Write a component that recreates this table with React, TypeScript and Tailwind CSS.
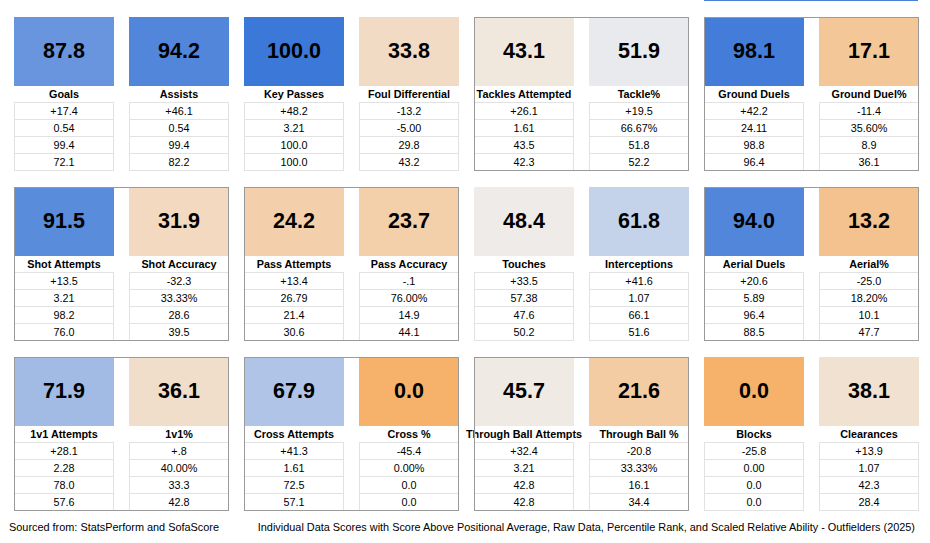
type Stat = {
  label: string;
  score: string;
  bg: string;
  rows: string[];
};

type Group = {
  boxed: boolean;
  stats: [Stat, Stat];
};

// rows: above positional average, raw, percentile rank, scaled ability
const grid: Group[][] = [
  [
    {
      boxed: false,
      stats: [
        { label: 'Goals', score: '87.8', bg: 'bg-[#6895de]', rows: ['+17.4', '0.54', '99.4', '72.1'] },
        { label: 'Assists', score: '94.2', bg: 'bg-[#5186db]', rows: ['+46.1', '0.54', '99.4', '82.2'] },
      ],
    },
    {
      boxed: false,
      stats: [
        { label: 'Key Passes', score: '100.0', bg: 'bg-[#3c78d8]', rows: ['+48.2', '3.21', '100.0', '100.0'] },
        { label: 'Foul Differential', score: '33.8', bg: 'bg-[#f1dbc4]', rows: ['-13.2', '-5.00', '29.8', '43.2'] },
      ],
    },
    {
      boxed: true,
      stats: [
        { label: 'Tackles Attempted', score: '43.1', bg: 'bg-[#f0e7dd]', rows: ['+26.1', '1.61', '43.5', '42.3'] },
        { label: 'Tackle%', score: '51.9', bg: 'bg-[#e8eaee]', rows: ['+19.5', '66.67%', '51.8', '52.2'] },
      ],
    },
    {
      boxed: true,
      stats: [
        { label: 'Ground Duels', score: '98.1', bg: 'bg-[#437cd9]', rows: ['+42.2', '24.11', '98.8', '96.4'] },
        { label: 'Ground Duel%', score: '17.1', bg: 'bg-[#f4c798]', rows: ['-11.4', '35.60%', '8.9', '36.1'] },
      ],
    },
  ],
  [
    {
      boxed: true,
      stats: [
        { label: 'Shot Attempts', score: '91.5', bg: 'bg-[#5a8cdc]', rows: ['+13.5', '3.21', '98.2', '76.0'] },
        { label: 'Shot Accuracy', score: '31.9', bg: 'bg-[#f2d9bf]', rows: ['-32.3', '33.33%', '28.6', '39.5'] },
      ],
    },
    {
      boxed: true,
      stats: [
        { label: 'Pass Attempts', score: '24.2', bg: 'bg-[#f3d0ab]', rows: ['+13.4', '26.79', '21.4', '30.6'] },
        { label: 'Pass Accuracy', score: '23.7', bg: 'bg-[#f3cfaa]', rows: ['-.1', '76.00%', '14.9', '44.1'] },
      ],
    },
    {
      boxed: false,
      stats: [
        { label: 'Touches', score: '48.4', bg: 'bg-[#efebe8]', rows: ['+33.5', '57.38', '47.6', '50.2'] },
        { label: 'Interceptions', score: '61.8', bg: 'bg-[#c5d3ea]', rows: ['+41.6', '1.07', '66.1', '51.6'] },
      ],
    },
    {
      boxed: true,
      stats: [
        { label: 'Aerial Duels', score: '94.0', bg: 'bg-[#5286db]', rows: ['+20.6', '5.89', '96.4', '88.5'] },
        { label: 'Aerial%', score: '13.2', bg: 'bg-[#f4c28e]', rows: ['-25.0', '18.20%', '10.1', '47.7'] },
      ],
    },
  ],
  [
    {
      boxed: true,
      stats: [
        { label: '1v1 Attempts', score: '71.9', bg: 'bg-[#a1bbe5]', rows: ['+28.1', '2.28', '78.0', '57.6'] },
        { label: '1v1%', score: '36.1', bg: 'bg-[#f1deca]', rows: ['+.8', '40.00%', '33.3', '42.8'] },
      ],
    },
    {
      boxed: true,
      stats: [
        { label: 'Cross Attempts', score: '67.9', bg: 'bg-[#afc4e7]', rows: ['+41.3', '1.61', '72.5', '57.1'] },
        { label: 'Cross %', score: '0.0', bg: 'bg-[#f6b26b]', rows: ['-45.4', '0.00%', '0.0', '0.0'] },
      ],
    },
    {
      boxed: true,
      stats: [
        { label: 'Through Ball Attempts', score: '45.7', bg: 'bg-[#f0eae4]', rows: ['+32.4', '3.21', '42.8', '42.8'] },
        { label: 'Through Ball %', score: '21.6', bg: 'bg-[#f3cca4]', rows: ['-20.8', '33.33%', '16.1', '34.4'] },
      ],
    },
    {
      boxed: false,
      stats: [
        { label: 'Blocks', score: '0.0', bg: 'bg-[#f6b26b]', rows: ['-25.8', '0.00', '0.0', '0.0'] },
        { label: 'Clearances', score: '38.1', bg: 'bg-[#f1e1d0]', rows: ['+13.9', '1.07', '42.3', '28.4'] },
      ],
    },
  ],
];

function StatColumn({ stat }: { stat: Stat }) {
  return (
    <div className="w-[100px] flex flex-col">
      <div className={`h-[69px] flex items-center justify-center ${stat.bg}`}>
        <span className="text-[21.5px] font-bold leading-none text-black">{stat.score}</span>
      </div>
      <div className="h-[16px] flex items-center justify-center whitespace-nowrap text-[10.8px] font-bold leading-none text-black">
        {stat.label}
      </div>
      <div className="border-t border-[#e2e2e2]">
        {stat.rows.map((v, i) => (
          <div
            key={i}
            className="h-[17px] flex items-center justify-center border-x border-b border-[#e2e2e2] text-[10.8px] leading-none text-black"
          >
            {v}
          </div>
        ))}
      </div>
    </div>
  );
}

function StatGroup({ group }: { group: Group }) {
  return (
    <div
      className={`flex gap-[15px] ${
        group.boxed ? 'outline outline-1 -outline-offset-1 outline-[#9a9a9a]' : ''
      }`}
    >
      <StatColumn stat={group.stats[0]} />
      <StatColumn stat={group.stats[1]} />
    </div>
  );
}

export default function App() {
  return (
    <div
      className="w-[930px] h-[543px] bg-white overflow-hidden"
      style={{ fontFamily: '"Liberation Sans", Arial, sans-serif' }}
    >
      {/* leftover selection edge above the last block */}
      <div className="h-[17px] pl-[704px]">
        <div className="w-[214px] h-px bg-[#4a80dc]" />
      </div>

      <div className="pl-[14px] flex flex-col gap-[16px]">
        {grid.map((row, r) => (
          <div key={r} className="flex gap-[15px]">
            {row.map((g, i) => (
              <StatGroup key={i} group={g} />
            ))}
          </div>
        ))}
      </div>

      <div className="mt-[10px] pl-[9px] pr-[15px] flex justify-between text-[10.9px] leading-[12px] text-black whitespace-nowrap">
        <span>Sourced from: StatsPerform and SofaScore</span>
        <span>
          Individual Data Scores with Score Above Positional Average, Raw Data, Percentile Rank, and Scaled
          Relative Ability - Outfielders (2025)
        </span>
      </div>
    </div>
  );
}
